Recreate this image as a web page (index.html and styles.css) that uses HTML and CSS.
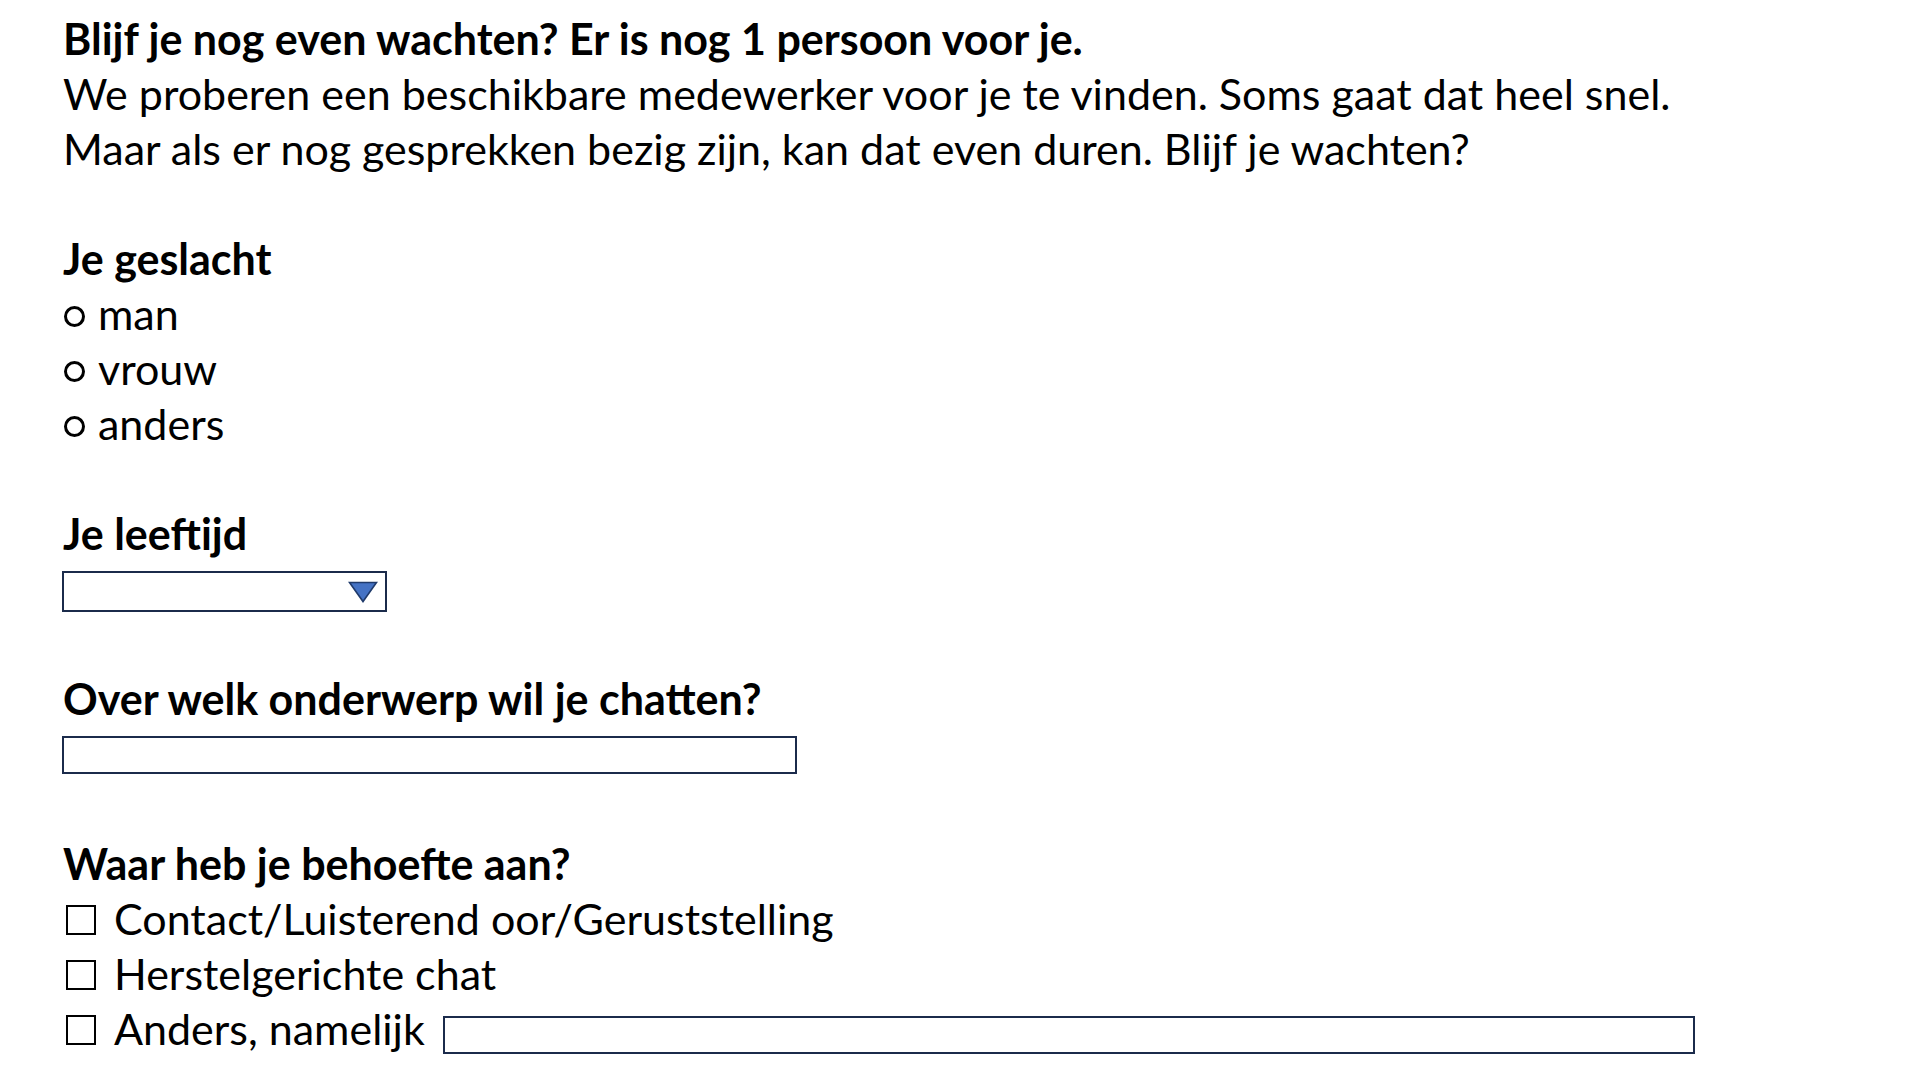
FILE: index.html
```html
<!DOCTYPE html>
<html lang="nl">
<head>
<meta charset="utf-8">
<title>Wachtrij</title>
<link rel="stylesheet" href="styles.css">
</head>
<body>
<main class="form">
  <section class="intro">
    <p class="title">Blijf je nog even wachten? Er is nog 1 persoon voor je.</p>
    <p class="text">We proberen een beschikbare medewerker voor je te vinden. Soms gaat dat heel snel.</p>
    <p class="text">Maar als er nog gesprekken bezig zijn, kan dat even duren. Blijf je wachten?</p>
  </section>

  <section class="group">
    <h2 class="label">Je geslacht</h2>
    <ul class="options">
      <li class="option"><span class="radio"></span>man</li>
      <li class="option"><span class="radio"></span>vrouw</li>
      <li class="option"><span class="radio"></span>anders</li>
    </ul>
  </section>

  <section class="group">
    <h2 class="label">Je leeftijd</h2>
    <div class="row">
      <div class="select">
        <svg class="arrow" width="30" height="22" viewBox="0 0 30 22"><polygon points="1.5,1.5 28.5,1.5 15,20.5" fill="#4472c4" stroke="#1f3a6b" stroke-width="1.6" stroke-linejoin="miter"/></svg>
      </div>
    </div>
  </section>

  <section class="group">
    <h2 class="label">Over welk onderwerp wil je chatten?</h2>
    <div class="row">
      <div class="input input-topic"></div>
    </div>
  </section>

  <section class="group">
    <h2 class="label">Waar heb je behoefte aan?</h2>
    <ul class="options">
      <li class="option check"><span class="box"></span>Contact/Luisterend oor/Geruststelling</li>
      <li class="option check"><span class="box"></span>Herstelgerichte chat</li>
      <li class="option check"><span class="box"></span>Anders, namelijk<span class="input input-other"></span></li>
    </ul>
  </section>
</main>
</body>
</html>
```

FILE: styles.css
```css
* { box-sizing: border-box; }
html, body { margin: 0; padding: 0; background: #ffffff; }
body {
  font-family: "Lato", "Liberation Sans", sans-serif;
  color: #000000;
}
.form {
  padding: 11px 0 0 63px;
  font-size: 43px;
  line-height: 55px;
}
.intro p { margin: 0; }
.title { font-weight: 700; }
.group { margin-top: 55px; }
.label { margin: 0; font-size: 43px; font-weight: 700; line-height: 55px; }
.options { list-style: none; margin: 0; padding: 0; }
.option { display: flex; align-items: center; height: 55px; }
.radio {
  flex: none;
  width: 21px; height: 21px;
  border: 3px solid #000;
  border-radius: 50%;
  margin-left: 1px;
  margin-right: 13px;
  margin-top: 5px;
}
.box {
  flex: none;
  width: 30px; height: 30px;
  border: 2px solid #000;
  margin-left: 3px;
  margin-right: 18px;
  margin-top: 2px;
}
.row { height: 55px; display: flex; align-items: center; }
.select {
  width: 325px; height: 41px;
  margin-left: -1px;
  margin-top: 6px;
  border: 2.5px solid #1b2b4b;
  display: flex; align-items: center; justify-content: flex-end;
  padding-right: 7px;
}
.input {
  display: block;
  height: 38px;
  border: 2.5px solid #1b2b4b;
}
.input-topic { width: 735px; margin-left: -1px; margin-top: 3px; }
.input-other { flex: none; width: 1252px; margin-left: 18px; margin-top: 13px; }
```
